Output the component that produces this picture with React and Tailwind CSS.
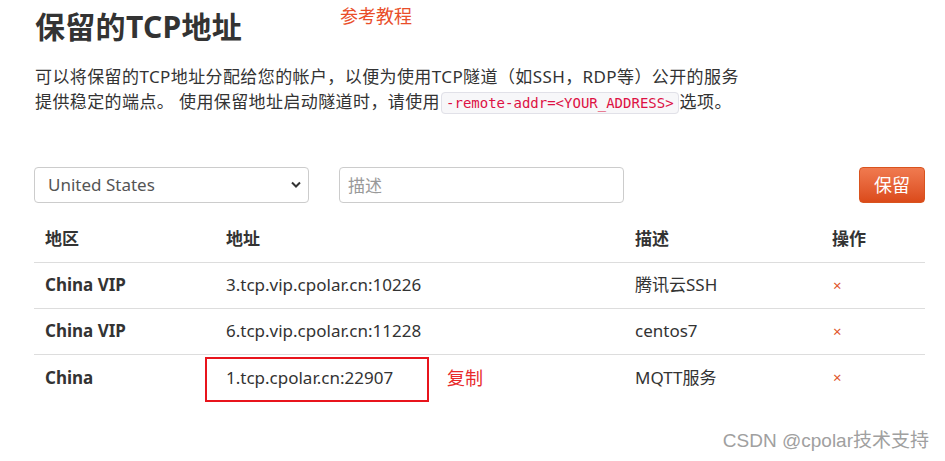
import { useState } from 'react';

const FONT = { fontFamily: '"Noto Sans", "Open Sans", "Noto Sans CJK SC", sans-serif' };

const ROWS = [
  { region: 'China VIP', addr: '3.tcp.vip.cpolar.cn:10226', desc: '腾讯云SSH' },
  { region: 'China VIP', addr: '6.tcp.vip.cpolar.cn:11228', desc: 'centos7' },
  { region: 'China', addr: '1.tcp.cpolar.cn:22907', desc: 'MQTT服务', marked: true },
];

const App = () => {
  const [region, setRegion] = useState('United States');
  const [desc, setDesc] = useState('');

  return (
    <div className="relative w-[945px] h-[461px] overflow-hidden bg-white text-[#333]" style={FONT}>
      <div className="pl-[34px] pr-[20px] pt-[8px]">

        {/* Header */}
        <div className="relative">
          <h1 className="pl-px text-[30px] leading-[38px] font-bold tracking-[0.3px]">保留的TCP地址</h1>
          <span className="absolute left-[306px] top-[-5px] text-[18px] text-[#e94e2a]">参考教程</span>
        </div>

        <p className="mt-[18px] pl-px text-[17px] leading-[25px] tracking-[0.4px]">
          可以将保留的TCP地址分配给您的帐户，以便为使用TCP隧道（如SSH，RDP等）公开的服务<br />
          提供稳定的端点。 使用保留地址启动隧道时，请使用
          <code className="mx-[1px] px-[4px] py-[2px] rounded-[4px] border border-[#e1e1e8] bg-[#f7f7f9] text-[14px] tracking-normal text-[#dd1144]"
            style={{ fontFamily: '"DejaVu Sans Mono", "Liberation Mono", monospace' }}>
            -remote-addr=&lt;YOUR_ADDRESS&gt;
          </code>
          选项。
        </p>

        {/* Form */}
        <div className="mt-[51px] flex items-center h-[36px]">
          <div className="relative w-[275px] h-[36px]">
            <select value={region} onChange={e => setRegion(e.target.value)}
              className="appearance-none w-full h-full rounded-[4px] border border-[#ccc] bg-white pl-[13px] text-[17px] text-[#555] outline-none">
              <option>United States</option>
              <option>China</option>
              <option>China VIP</option>
            </select>
            <svg className="absolute right-[7px] top-[13px] pointer-events-none" width="12" height="10" viewBox="0 0 12 10">
              <path d="M2 2.5 L6 6.5 L10 2.5" fill="none" stroke="#333" strokeWidth="2" />
            </svg>
          </div>
          <input value={desc} onChange={e => setDesc(e.target.value)} placeholder="描述"
            className="ml-[30px] w-[285px] h-[36px] rounded-[4px] border border-[#ccc] px-[8px] text-[17px] text-[#555] placeholder:text-[#999] outline-none" />
          <button className="ml-auto w-[66px] h-[36px] rounded-[4px] border border-[#d9531e] bg-gradient-to-b from-[#f07a4f] to-[#db4a19] text-white text-[18px]">
            保留
          </button>
        </div>

        {/* Table */}
        <table className="mt-[13px] w-[891px] text-[17px] border-collapse">
          <thead>
            <tr className="h-[46px] border-b border-[#ddd]">
              <th className="w-[181px] pl-[11px] text-left font-bold">地区</th>
              <th className="w-[409px] pl-[11px] text-left font-bold">地址</th>
              <th className="w-[197px] pl-[11px] text-left font-bold">描述</th>
              <th className="pl-[11px] text-left font-bold">操作</th>
            </tr>
          </thead>
          <tbody>
            {ROWS.map((r, i) => (
              <tr key={i} className={`h-[46px] ${i < ROWS.length - 1 ? 'border-b border-[#ddd]' : ''}`}>
                <td className="pl-[11px] font-bold">{r.region}</td>
                <td className="pl-[11px] relative">
                  {r.addr}
                  {r.marked && (
                    <>
                      <div className="absolute left-[-10px] top-[2px] w-[224px] h-[45px] border-2 border-[#e8141c]" />
                      <span className="absolute left-[232px] top-[10px] text-[18px] text-[#e82a2a]">复制</span>
                    </>
                  )}
                </td>
                <td className="pl-[11px]">{r.desc}</td>
                <td className="pl-[12px] text-[#e0542a] text-[15px]">×</td>
              </tr>
            ))}
          </tbody>
        </table>
      </div>

      {/* Watermark */}
      <span className="absolute right-[16px] top-[427px] text-[19px] text-[#a0a0a0]"
        style={{ fontFamily: '"Liberation Sans", "Noto Sans CJK SC", sans-serif' }}>
        CSDN @cpolar技术支持
      </span>
    </div>
  );
};

export default App;
